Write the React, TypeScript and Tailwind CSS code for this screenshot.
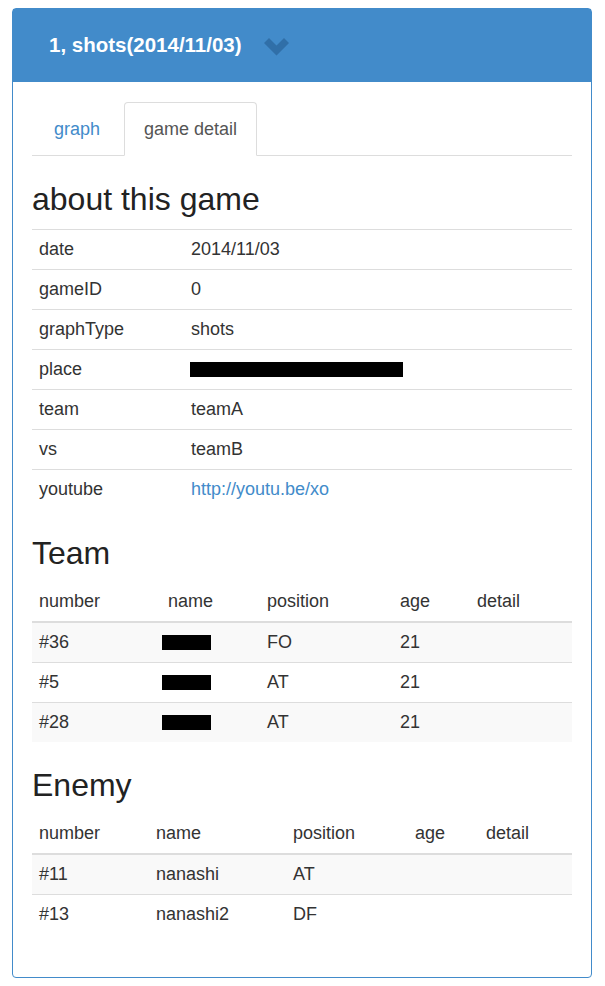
import React from 'react'

const infoRows: [string, React.ReactNode][] = [
  ['date', '2014/11/03'],
  ['gameID', '0'],
  ['graphType', 'shots'],
  ['place', <div className="flex h-[23px] items-center"><span className="ml-[-1px] block h-[15px] w-[213px] bg-black" /></div>],
  ['team', 'teamA'],
  ['vs', 'teamB'],
  ['youtube', <a className="text-[#428bca]" href="#">http://youtu.be/xo</a>],
]

const Redacted = () => (
  <div className="flex h-[23px] items-center">
    <span className="ml-[-6px] block h-[15px] w-[49px] bg-black" />
  </div>
)

const teamRows = [
  { number: '#36', name: <Redacted />, position: 'FO', age: '21' },
  { number: '#5', name: <Redacted />, position: 'AT', age: '21' },
  { number: '#28', name: <Redacted />, position: 'AT', age: '21' },
]

const enemyRows = [
  { number: '#11', name: 'nanashi', position: 'AT', age: '' },
  { number: '#13', name: 'nanashi2', position: 'DF', age: '' },
]

type Row = { number: string; name: React.ReactNode; position: string; age: string }

function PlayerTable({ rows, widths }: { rows: Row[]; widths: string[] }) {
  const heads = ['number', 'name', 'position', 'age', 'detail']
  return (
    <table className="w-full table-fixed border-separate border-spacing-0">
      <colgroup>
        {widths.map((w, i) => (
          <col key={i} className={w} />
        ))}
      </colgroup>
      <thead>
        <tr>
          {heads.map(h => (
            <th key={h} className="border-b-2 border-[#ddd] px-[7px] py-2 text-left font-normal leading-[23px]">
              {h}
            </th>
          ))}
        </tr>
      </thead>
      <tbody>
        {rows.map((r, i) => {
          const cell = `px-[7px] py-2 leading-[23px] ${i > 0 ? 'border-t border-[#ddd]' : ''}`
          return (
            <tr key={i} className={i % 2 === 0 ? 'bg-[#f9f9f9]' : ''}>
              <td className={cell}>{r.number}</td>
              <td className={cell}>{r.name}</td>
              <td className={cell}>{r.position}</td>
              <td className={cell}>{r.age}</td>
              <td className={cell}></td>
            </tr>
          )
        })}
      </tbody>
    </table>
  )
}

export default function App() {
  return (
    <div
      className="min-h-screen bg-white pl-[12px] pt-[8px] text-[18px] text-[#333]"
      style={{ fontFamily: '"Liberation Sans", Arial, sans-serif' }}
    >
      <div className="w-[580px] rounded-[4px] border border-[#428bca]">
        {/* Cabecera */}
        <div className="flex h-[73px] items-center bg-[#428bca] pl-[36px]">
          <span className="text-[20.5px] font-bold text-white">1, shots(2014/11/03)</span>
          <svg className="ml-[22px] mt-[2px]" width="25" height="18" viewBox="0 0 25 18">
            <polygon points="0,5 5,0 12.5,7.5 20,0 25,5 12.5,17.5" fill="#306fa8" />
          </svg>
        </div>

        <div className="px-[19px] pb-[43px] pt-[20px]">
          {/* Pestañas */}
          <div className="flex border-b border-[#ddd]">
            <div className="-mb-px mr-[2px] flex h-[54px] items-center border border-transparent px-[21px] text-[#428bca]">
              graph
            </div>
            <div className="-mb-px flex h-[54px] items-center rounded-t-[4px] border border-[#ddd] border-b-white bg-white px-[19px] text-[#555]">
              game detail
            </div>
          </div>

          <h2 className="mb-[12px] mt-[26px] text-[32px] leading-[35px] text-[#222]">about this game</h2>
          <table className="w-full table-fixed border-separate border-spacing-0">
            <colgroup>
              <col className="w-[152px]" />
              <col />
            </colgroup>
            <tbody>
              {infoRows.map(([k, v]) => (
                <tr key={k}>
                  <td className="border-t border-[#ddd] px-[7px] py-2 leading-[23px]">{k}</td>
                  <td className="border-t border-[#ddd] px-[7px] py-2 leading-[23px]">{v}</td>
                </tr>
              ))}
            </tbody>
          </table>

          <h2 className="mb-[11px] mt-[27px] text-[32px] leading-[35px] text-[#222]">Team</h2>
          <PlayerTable rows={teamRows} widths={['w-[129px]', 'w-[99px]', 'w-[133px]', 'w-[77px]', '']} />

          <h2 className="mb-[11px] mt-[26px] text-[32px] leading-[35px] text-[#222]">Enemy</h2>
          <PlayerTable rows={enemyRows} widths={['w-[117px]', 'w-[137px]', 'w-[122px]', 'w-[71px]', '']} />
        </div>
      </div>
    </div>
  )
}
